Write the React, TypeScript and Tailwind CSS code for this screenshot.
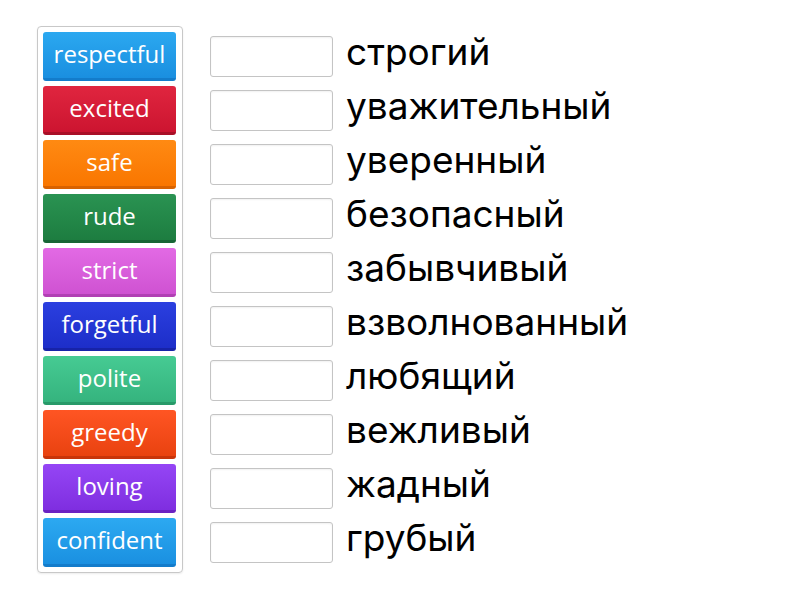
import React from "react";

const tiles: { label: string; bg: string }[] = [
  { label: "respectful", bg: "bg-gradient-to-b from-[#2ba8f0] to-[#1a8fe0] border-b-[#137ccb]" },
  { label: "excited", bg: "bg-gradient-to-b from-[#e0253f] to-[#cc1430] border-b-[#a90f27]" },
  { label: "safe", bg: "bg-gradient-to-b from-[#ff8a12] to-[#f97600] border-b-[#d86200]" },
  { label: "rude", bg: "bg-gradient-to-b from-[#2a9352] to-[#1d7d40] border-b-[#176535]" },
  { label: "strict", bg: "bg-gradient-to-b from-[#e26ae4] to-[#cf52d2] border-b-[#b13fb4]" },
  { label: "forgetful", bg: "bg-gradient-to-b from-[#2b3fe0] to-[#1d2ec9] border-b-[#1723a8]" },
  { label: "polite", bg: "bg-gradient-to-b from-[#46cb93] to-[#35b47e] border-b-[#289a69]" },
  { label: "greedy", bg: "bg-gradient-to-b from-[#ff5523] to-[#e9420f] border-b-[#c8340a]" },
  { label: "loving", bg: "bg-gradient-to-b from-[#9545f5] to-[#7f2ee0] border-b-[#6a22c2]" },
  { label: "confident", bg: "bg-gradient-to-b from-[#2ca9f1] to-[#1a90e1] border-b-[#137ccb]" },
];

const words = [
  "строгий",
  "уважительный",
  "уверенный",
  "безопасный",
  "забывчивый",
  "взволнованный",
  "любящий",
  "вежливый",
  "жадный",
  "грубый",
];

export default function App() {
  return (
    <div className="w-[800px] h-[600px] bg-white flex pt-[26px] pl-[37px]">
      <div className="w-[146px] self-start border border-[#c8c8c8] rounded-[4px] pl-[5px] pr-[6px] pt-[5px] pb-[5px] flex flex-col gap-[5px] shadow-[0_1px_2px_rgba(0,0,0,0.08)]">
        {tiles.map((t) => (
          <div
            key={t.label}
            className={`h-[49px] rounded-[3px] border-b-[3px] flex items-center justify-center text-white text-[24px] font-medium ${t.bg}`}
            style={{ fontFamily: "'Open Sans', Lato, sans-serif" }}
          >
            <span className="leading-none -mt-[2px]">{t.label}</span>
          </div>
        ))}
      </div>
      <div className="flex flex-col ml-[27px] pt-[4px]">
        {words.map((w) => (
          <div key={w} className="h-[54px] flex items-center">
            <div className="self-start mt-[6px] w-[123px] h-[41px] border border-[#c4c4c4] rounded-[3px] bg-white shadow-[inset_0_1px_2px_rgba(0,0,0,0.06)]" />
            <span
              className="ml-[13px] text-[37px] text-black leading-none -mt-[12px]"
              style={{ fontFamily: "Inter, Roboto, sans-serif" }}
            >
              {w}
            </span>
          </div>
        ))}
      </div>
    </div>
  );
}
